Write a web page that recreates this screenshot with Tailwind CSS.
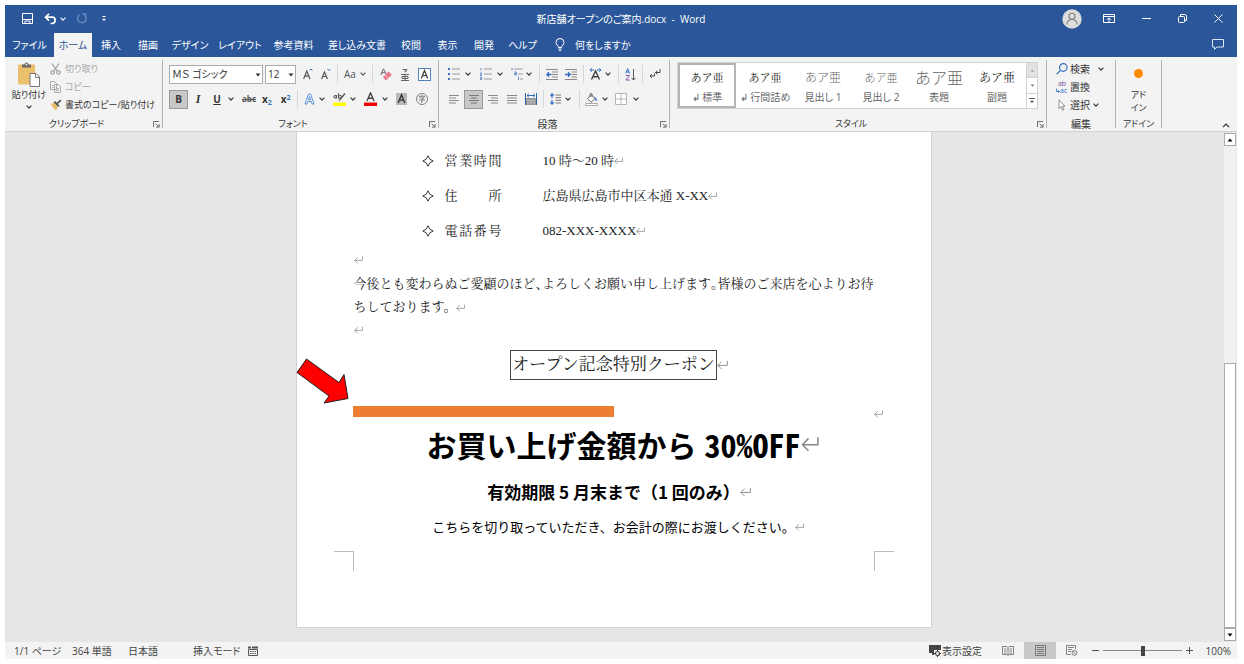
<!DOCTYPE html>
<html lang="ja">
<head>
<meta charset="utf-8">
<meta name="viewport" content="width=device-width, initial-scale=1">
<title>新店舗オープンのご案内.docx - Word</title>
<script src="https://cdn.jsdelivr.net/npm/@tailwindcss/browser@4"></script>
</head>
<body class="bg-white font-['Open_Sans','Noto_Sans_CJK_JP',sans-serif] text-[10px] leading-3 text-[#333]">

<svg class="hidden" aria-hidden="true">
  <symbol id="chev" viewBox="0 0 6 4"><path d="M.6.7 3 3.1 5.4.7" fill="none" stroke="currentColor" stroke-width="1.1"/></symbol>
  <symbol id="tri" viewBox="0 0 6 4"><path d="M.5.5h5L3 3.5z" fill="currentColor"/></symbol>
  <symbol id="ret" viewBox="0 0 24 20"><path d="M22.500 1v10H2M10 2.500 2 11l8 8" fill="none" stroke="#888" stroke-width="2"/></symbol>
  <symbol id="launch" viewBox="0 0 8 8"><path d="M.5 7V.5H7M3 3l3.500 3.500M7 3.500V7H3.500" fill="none" stroke="#555"/></symbol>
  <symbol id="diamond" viewBox="0 0 12 12"><path d="M6 .8Q7 5 11.200 6 7 7 6 11.200 5 7 .8 6 5 5 6 .8z" fill="none" stroke="#222" stroke-width=".9"/></symbol>
</svg>

<div class="flex h-screen flex-col overflow-hidden pt-[5px] pr-[7px] pb-[5px] pl-[5px]">

  <!-- Title bar and tabs -->
  <header class="shrink-0 bg-[#2b579a] text-white [font-feature-settings:'palt']">
    <div class="grid h-[27px] grid-cols-[1fr_auto_1fr] items-center">
      <div class="flex items-center pl-[17px]">
        <button aria-label="上書き保存"><svg class="h-[11px] w-[11px]" viewBox="0 0 11 11" fill="none" stroke="#fff"><path d="M.5.5h10v10H.5zM.5 6.500h10M3 10.500v-2.500h5v2.500" /></svg></button>
        <button aria-label="元に戻す" class="ml-[11px]"><svg class="h-[12px] w-[12px]" viewBox="0 0 12 12" fill="none" stroke="#fff" stroke-width="1.700"><path d="M5 .8 1.500 4.200 5 7.600M1.500 4.200H8a3 3 0 0 1 0 6.300H6.500"/></svg></button>
        <button aria-label="元に戻す一覧" class="ml-1"><svg class="h-1 w-[6px]"><use href="#chev"/></svg></button>
        <button aria-label="繰り返し" class="ml-[10px] text-[#6e8fc4]"><svg class="h-[11px] w-[11px]" viewBox="0 0 11 11" fill="none" stroke="currentColor" stroke-width="1.300"><path d="M8.500 2a4.300 4.300 0 1 1-5-.2M6 .8h3.600v3.700"/></svg></button>
        <button aria-label="クイック アクセスの設定" class="ml-[14px]"><svg class="h-[6px] w-[6px]" viewBox="0 0 6 6" fill="#fff"><path d="M1.500 0h3v1h-3zM1 2.800h4L3 5z"/></svg></button>
      </div>
      <h1 class="whitespace-pre">新店舗オープンのご案内.docx  -  Word</h1>
      <div class="flex items-center justify-end pr-[14px]">
        <button aria-label="アカウント"><svg class="h-5 w-5" viewBox="0 0 20 20"><circle cx="10" cy="10" r="9.700" fill="#dcdcdc"/><g fill="none" stroke="#808080" stroke-width="1.100"><circle cx="10" cy="7.200" r="3"/><path d="M4.800 15.500c.3-3.500 2.400-5 5.200-5s4.900 1.500 5.200 5"/></g></svg></button>
        <button aria-label="リボンの表示オプション" class="ml-[21px]"><svg class="h-[9px] w-[12px]" viewBox="0 0 12 9" fill="none" stroke="#fff"><path d="M.5.500h11v8H.5zM.5 2.500h11M6 8V4M4 5.800l2-2 2 2"/></svg></button>
        <button aria-label="最小化" class="ml-[27px]"><svg class="h-[9px] w-[9px]" viewBox="0 0 9 9"><path d="M0 4.500h9" stroke="#fff"/></svg></button>
        <button aria-label="元に戻す（縮小）" class="ml-[27px]"><svg class="h-[9px] w-[9px]" viewBox="0 0 9 9" fill="none" stroke="#fff"><rect x=".5" y="2.500" width="6" height="6" rx="1"/><path d="M2.500 2V.5h4.200a1.800 1.800 0 0 1 1.800 1.800v4.200H7"/></svg></button>
        <button aria-label="閉じる" class="ml-[27px]"><svg class="h-[9px] w-[9px]" viewBox="0 0 9 9"><path d="m.5.5 8 8m0-8-8 8" stroke="#fff"/></svg></button>
      </div>
    </div>
    <nav class="flex h-[25px] items-stretch whitespace-nowrap" aria-label="リボン タブ">
      <button class="w-[49px]">ファイル</button>
      <button class="mt-px w-[38px] bg-[#f3f3f3] text-[#2b579a]">ホーム</button>
      <button class="w-[38px]">挿入</button>
      <button class="w-[36px]">描画</button>
      <button class="w-[48px]">デザイン</button>
      <button class="w-[52px]">レイアウト</button>
      <button class="w-[55px]">参考資料</button>
      <button class="w-[72px]">差し込み文書</button>
      <button class="w-[36px]">校閲</button>
      <button class="w-[37px]">表示</button>
      <button class="w-[36px]">開発</button>
      <button class="w-[41px]">ヘルプ</button>
      <button class="ml-[12px] flex items-center gap-[10px]"><svg class="h-[13px] w-[10px]" viewBox="0 0 10 13" fill="none" stroke="#fff"><path d="M3.500 9.500C3.500 7.500 1 6.800 1 4.500a4 4 0 0 1 8 0C9 6.800 6.500 7.500 6.500 9.500zM3.500 11h3M4 12.500h2"/></svg>何をしますか</button>
      <button aria-label="コメント" class="mr-[13px] ml-auto"><svg class="h-[11px] w-[12px]" viewBox="0 0 12 11" fill="none" stroke="#dce6f5"><path d="M.5.5h11v7.500H5L2.500 10.300V8h-2z"/></svg></button>
    </nav>
  </header>

  <!-- Ribbon -->
  <section class="flex h-[75px] shrink-0 border-b border-[#d2d2d2] bg-[#f3f3f3] [font-feature-settings:'palt']" aria-label="リボン">

    <div class="flex w-[157px] flex-col text-[9px]">
      <div class="flex flex-1 pt-[4px] pl-[6px]">
        <button class="flex w-[36px] flex-col items-center whitespace-nowrap">
          <svg class="h-[27px] w-[24px] shrink-0" viewBox="0 0 24 27"><rect x="1" y="3.500" width="17" height="20" rx="1" fill="#eac06d"/><path d="M5 6.500V3.500h2.500a2 2 0 0 1 4 0H14v3z" fill="#6a6a6a"/><circle cx="9.500" cy="3.500" r=".9" fill="#f3f3f3"/><path d="M13 12.500h6l3.500 3.500v9.500H13z" fill="#fff" stroke="#777"/><path d="M18.500 12.500V16.500h4" fill="none" stroke="#777"/></svg>
          <span class="mt-px">貼り付け</span>
          <svg class="mt-[4px] h-1 w-[6px]"><use href="#chev"/></svg>
        </button>
        <div class="ml-[3px] flex flex-col items-start gap-[6px] pt-[2px]">
          <button disabled class="flex items-center gap-1 text-[#a6a6a6]"><svg class="h-[12px] w-[11px]" viewBox="0 0 11 12" fill="none" stroke="#999" stroke-width="1.100"><path d="m2 .5 5.300 7.800M9 .5 3.700 8.300"/><circle cx="2.500" cy="9.500" r="1.700"/><circle cx="8.500" cy="9.500" r="1.700"/></svg>切り取り</button>
          <button disabled class="flex items-center gap-1 text-[#a6a6a6]"><svg class="h-[12px] w-[11px]" viewBox="0 0 11 12" fill="#f3f3f3" stroke="#aaa"><path d="M.5.500h4l2 2v6h-6zM4.500 3.500h4l2 2v6h-6z"/><path d="M6 7.500h3M6 9.500h3M2 4.500h1.500M2 6.500h1.500"/></svg>コピー</button>
          <button class="flex items-center gap-[3px] whitespace-nowrap"><svg class="h-[12px] w-[12px]" viewBox="0 0 12 12"><path d="M.8 5 4 3.500 8 7.500 6 11.500Q2.500 9.500.8 5z" fill="#eac06d"/><path d="m3.500 3.200 4.800 4.800 1.300-1.300-1.700-1.700L11.500 1.800 10.300.6 6.800 3.800 5 2z" fill="#555"/></svg>書式のコピー/貼り付け</button>
        </div>
      </div>
      <div class="flex h-[14px] items-center pr-[2px]"><span class="flex-1 pr-[5px] text-center">クリップボード</span><button aria-label="クリップボードの詳細"><svg class="h-[7px] w-[7px]"><use href="#launch"/></svg></button></div>
    </div>
    <div class="my-[3px] w-px bg-[#b4b4b4]"></div>

    <div class="flex w-[275px] flex-col pl-[6px]">
      <div class="flex flex-1 flex-col gap-px pt-[5px]">
        <div class="flex h-6 items-center">
          <div class="relative"><select aria-label="フォント" class="h-[19px] w-[94px] appearance-none border border-[#ababab] bg-white px-[2px] text-[10px] outline-none"><option>ＭＳ ゴシック</option></select><svg class="pointer-events-none absolute top-[8px] right-[2px] h-1 w-[6px]"><use href="#tri"/></svg></div>
          <div class="relative ml-[2px]"><select aria-label="フォント サイズ" class="h-[19px] w-[31px] appearance-none border border-[#ababab] bg-white px-[2px] text-[10px] outline-none"><option>12</option></select><svg class="pointer-events-none absolute top-[8px] right-[2px] h-1 w-[6px]"><use href="#tri"/></svg></div>
          <button aria-label="フォント サイズの拡大" class="ml-[7px]"><svg class="h-[12px] w-[10px]" viewBox="0 0 10 12" fill="none"><path d="m.6 11 3.200-8 3.200 8M1.700 8.200h4.200" stroke="#555" stroke-width="1.200"/><path d="m6.500 2.500 1.500-1.500L9.500 2.500" stroke="#3c6ebf"/></svg></button>
          <button aria-label="フォント サイズの縮小" class="ml-[8px]"><svg class="h-[12px] w-[10px]" viewBox="0 0 10 12" fill="none"><path d="m.6 11 2.900-7 2.900 7M1.600 8.500h3.800" stroke="#555" stroke-width="1.200"/><path d="M6.500 1 8 2.500 9.500 1" stroke="#3c6ebf"/></svg></button>
          <div class="ml-[6px] h-[18px] w-px bg-[#d6d6d6]"></div>
          <button aria-label="文字種の変換" class="ml-[6px] flex items-center gap-1 text-[#555]">Aa<svg class="h-1 w-[6px]"><use href="#chev"/></svg></button>
          <div class="ml-[6px] h-[18px] w-px bg-[#d6d6d6]"></div>
          <button aria-label="書式のクリア" class="ml-[7px]"><svg class="h-[13px] w-[12px]" viewBox="0 0 12 13"><path d="M.8 7 3.500.8 6 6M1.800 4.700h3.300" fill="none" stroke="#666"/><path d="M3 9 8.500 3.500l3.300 3.300-5.500 5.500H5.500z" fill="#e8798c"/><path d="m5 7.300 3.200 3.200" stroke="#fff" stroke-width=".7"/></svg></button>
          <button aria-label="ルビ" class="ml-[9px]"><svg class="h-[13px] w-[8px]" viewBox="0 0 8 13" fill="none" stroke="#555" stroke-width=".9"><path d="M1.500 1.500h4.500L4.500 4M4 2.500v2M0 6.500h8M1 8.500h6v2H1zM4 6.500v6M0 12.500h8"/></svg></button>
          <button aria-label="囲み線" class="ml-[9px]"><svg class="h-[13px] w-[13px]" viewBox="0 0 13 13" fill="none"><rect x=".5" y=".5" width="12" height="12" stroke="#4f81bd" fill="#fff"/><path d="m3.300 10.500 3.200-8 3.200 8M4.400 7.700h4.200" stroke="#444" stroke-width="1.300"/></svg></button>
        </div>
        <div class="flex h-6 items-center">
          <button class="h-[19px] w-[19px] border border-[#999] bg-[#c8c8c8] font-bold">B</button>
          <button class="w-[20px] font-['Liberation_Serif'] text-[12px] font-bold italic">I</button>
          <button class="w-[18px] font-bold underline underline-offset-1">U</button>
          <button aria-label="下線の種類" class="ml-[2px]"><svg class="h-1 w-[6px]"><use href="#chev"/></svg></button>
          <button class="ml-[8px] text-[8px] font-bold text-[#555] line-through">abc</button>
          <button aria-label="下付き" class="ml-[6px] font-bold">x<sub class="text-[7px] leading-none text-[#3c6ebf]">2</sub></button>
          <button aria-label="上付き" class="ml-[9px] font-bold">x<sup class="text-[7px] leading-none text-[#3c6ebf]">2</sup></button>
          <div class="ml-[6px] h-[18px] w-px bg-[#d6d6d6]"></div>
          <button aria-label="文字の効果" class="ml-[6px] flex items-center gap-[4px]"><svg class="h-[12px] w-[11px]" viewBox="0 0 11 12"><path d="M1 11 4.500 1h2L10 11H8L7.300 8.500H3.700L3 11zM4.300 6.800h2.400L5.500 3.500z" fill="#fff" stroke="#5b93d6"/></svg><svg class="h-1 w-[6px]"><use href="#chev"/></svg></button>
          <button aria-label="蛍光ペン" class="ml-[8px] flex items-center gap-[4px]"><svg class="h-[14px] w-[13px]" viewBox="0 0 13 14"><path d="M0 10.500h13V14H0z" fill="#ffff00"/><g fill="none" stroke="#555"><circle cx="2" cy="4.800" r="1.300"/><path d="M3.500 3v3.500M5.500 1v5.500"/><circle cx="7" cy="4.800" r="1.400"/></g><path d="m12.500 2-5 6-2 1.500 1-2.500L11.500 1z" fill="#555"/></svg><svg class="h-1 w-[6px]"><use href="#chev"/></svg></button>
          <button aria-label="フォントの色" class="ml-[8px] flex items-center gap-[5px]"><svg class="h-[14px] w-[13px]" viewBox="0 0 13 14"><path d="M0 10.500h13V14H0z" fill="#f00000"/><path d="M3 9 6.500.8 10 9M4.200 6.300h4.600" fill="none" stroke="#444" stroke-width="1.400"/></svg><svg class="h-1 w-[6px]"><use href="#chev"/></svg></button>
          <button aria-label="文字の網かけ" class="ml-[8px]"><svg class="h-[12px] w-[11px]" viewBox="0 0 11 12"><path d="M0 0h11v12H0z" fill="#b8b8b8"/><path d="m2.200 10 3.300-8.300L8.800 10M3.500 7.200h4" fill="none" stroke="#333" stroke-width="1.300"/></svg></button>
          <button aria-label="囲い文字" class="ml-[9px]"><svg class="h-[12px] w-[12px]" viewBox="0 0 12 12" fill="none" stroke="#666" stroke-width=".8"><circle cx="6" cy="6" r="5.500"/><path d="M6 2v1.200M3.300 4.500V3.300h5.400v1.200M4.200 5h3.600L6 6.300v2.800q0 .6-1 .5M3 7h6"/></svg></button>
        </div>
      </div>
      <div class="flex h-[14px] items-center pr-[2px] text-[9px]"><span class="flex-1 pr-3 text-center">フォント</span><button aria-label="フォントの詳細"><svg class="h-[7px] w-[7px]"><use href="#launch"/></svg></button></div>
    </div>
    <div class="my-[3px] w-px bg-[#b4b4b4]"></div>

    <div class="flex w-[230px] flex-col">
      <div class="flex flex-1 flex-col gap-px pt-[5px] pl-[9px]">
        <div class="flex h-6 items-center">
          <button aria-label="箇条書き" class="flex items-center gap-[5px]"><svg class="h-[12px] w-[12px]" viewBox="0 0 12 12"><path d="M0 0h2v2H0zM0 5h2v2H0zM0 10h2v2H0z" fill="#3c6ebf"/><path d="M4 1h8M4 6h8M4 11h8" stroke="#999"/></svg><svg class="h-1 w-[6px]"><use href="#chev"/></svg></button>
          <button aria-label="段落番号" class="ml-[9px] flex items-center gap-[5px]"><svg class="h-[12px] w-[12px]" viewBox="0 0 12 12"><path d="M1 0v2.500M0 5h1.500v1L0 7.500h2M0 9.500h1.500v2.500H0M0 10.800h1.500" fill="none" stroke="#3c6ebf" stroke-width=".8"/><path d="M4 1h8M4 6h8M4 11h8" stroke="#999"/></svg><svg class="h-1 w-[6px]"><use href="#chev"/></svg></button>
          <button aria-label="アウトライン" class="ml-[8px] flex items-center gap-[3px]"><svg class="h-[12px] w-[12px]" viewBox="0 0 12 12"><path d="M1 0v2.500M3.500 4h1.800v3H3.500V5.500h1.800M7.500 8.500V12" fill="none" stroke="#3c6ebf" stroke-width=".8"/><path d="M3 1h9M7 6h5M9 11h3" stroke="#999"/></svg><svg class="h-1 w-[6px]"><use href="#chev"/></svg></button>
          <div class="ml-[7px] h-[18px] w-px bg-[#d6d6d6]"></div>
          <button aria-label="インデントを減らす" class="ml-[6px]"><svg class="h-[11px] w-[12px]" viewBox="0 0 12 11" fill="none"><path d="M0 .5h12M6 3h6M6 5.500h6M6 8h6M0 10.500h12" stroke="#888"/><path d="M5.500 5.500H1M3 3.200.8 5.500 3 7.800" stroke="#2f6cc0" stroke-width="1.300"/></svg></button>
          <button aria-label="インデントを増やす" class="ml-[7px]"><svg class="h-[11px] w-[12px]" viewBox="0 0 12 11" fill="none"><path d="M0 .5h12M6.500 3H12M6.500 5.500H12M6.500 8H12M0 10.500h12" stroke="#888"/><path d="M0 5.500h5M3 3.200l2.200 2.300L3 7.800" stroke="#2f6cc0" stroke-width="1.300"/></svg></button>
          <div class="ml-[6px] h-[18px] w-px bg-[#d6d6d6]"></div>
          <button aria-label="拡張書式" class="ml-[5px] flex items-center gap-[3px]"><svg class="h-[12px] w-[13px]" viewBox="0 0 13 12" fill="none"><path d="m2.500 11.500 4-8.500 4 8.500M4 8.800h5" stroke="#444" stroke-width="1.400"/><path d="M5 2H1m1.800-1.700L1 2l1.800 1.700M8 2h4M10.200.3 12 2l-1.800 1.700" stroke="#2f6cc0"/></svg><svg class="h-1 w-[6px]"><use href="#chev"/></svg></button>
          <div class="ml-[7px] h-[18px] w-px bg-[#d6d6d6]"></div>
          <button aria-label="並べ替え" class="ml-[6px]"><svg class="h-[13px] w-[11px]" viewBox="0 0 11 13" fill="none"><path d="M.7 5.500 2.700.7l2 4.800M1.400 4h2.600" stroke="#2f6cc0"/><path d="M.8 7.500h3.800L.8 12h4" stroke="#8a4fa8"/><path d="M8.500 1v11M6.500 9.800l2 2.200 2-2.200" stroke="#555"/></svg></button>
          <div class="ml-[6px] h-[18px] w-px bg-[#d6d6d6]"></div>
          <button aria-label="編集記号の表示" class="ml-[6px]"><svg class="h-[10px] w-[12px]" viewBox="0 0 12 10" fill="none" stroke="#444"><path d="M11 0v3.500H6.500M8.300 1.700 6.500 3.500l1.800 1.800M5.500 4.500v2.500H1M2.800 5.200 1 7l1.800 1.800"/></svg></button>
        </div>
        <div class="flex h-6 items-center">
          <button aria-label="左揃え" class="ml-px"><svg class="h-[9px] w-[10px]" viewBox="0 0 10 9" stroke="#888"><path d="M0 .5h10M0 3h7M0 5.500h10M0 8h7"/></svg></button>
          <button aria-label="中央揃え" class="ml-[5px] grid h-[19px] w-[19px] place-items-center border border-[#999] bg-[#c8c8c8]"><svg class="h-[9px] w-[10px]" viewBox="0 0 10 9" stroke="#777"><path d="M0 .5h10M2 3h6M0 5.500h10M2 8h6"/></svg></button>
          <button aria-label="右揃え" class="ml-[5px]"><svg class="h-[9px] w-[10px]" viewBox="0 0 10 9" stroke="#888"><path d="M0 .5h10M3 3h7M0 5.500h10M3 8h7"/></svg></button>
          <button aria-label="両端揃え" class="ml-[9px]"><svg class="h-[9px] w-[10px]" viewBox="0 0 10 9" stroke="#888"><path d="M0 .5h10M0 3h10M0 5.500h10M0 8h10"/></svg></button>
          <button aria-label="均等割り付け" class="ml-[8px]"><svg class="h-[12px] w-[12px]" viewBox="0 0 12 12" fill="none"><path d="M0 5h12v7H0z" fill="#999"/><path d="M.5 0v12M11.500 0v12" stroke="#2f5fa8"/><path d="M2 2.500h8M3.800.8 2 2.500l1.800 1.700M8.200.8 10 2.500 8.200 4.200" stroke="#2f6cc0"/><path d="M2 7.500h8M2 9.800h8" stroke="#ddd" stroke-width=".6"/></svg></button>
          <div class="ml-[6px] h-[18px] w-px bg-[#d6d6d6]"></div>
          <button aria-label="行間" class="ml-[6px] flex items-center gap-[4px]"><svg class="h-[12px] w-[11px]" viewBox="0 0 11 12" fill="none"><path d="M2 1v4M2 7v4M.3 2.700 2 .8l1.700 1.900M.3 9.300 2 11.200l1.700-1.900" stroke="#2f6cc0" stroke-width="1.200"/><path d="M5.500 2H11M5.500 4.700H11M5.500 7.300H11M5.500 10H11" stroke="#777"/></svg><svg class="h-1 w-[6px]"><use href="#chev"/></svg></button>
          <div class="ml-[8px] h-[18px] w-px bg-[#d6d6d6]"></div>
          <button aria-label="塗りつぶし" class="ml-[5px] flex items-center gap-[4px]"><svg class="h-[13px] w-[13px]" viewBox="0 0 13 13"><path d="M.5 10.500h12v2H.5z" fill="#fff" stroke="#aaa"/><path d="M2.500 5.500 6.500 2 10 5.500 6 9.300zM5 4V.8h2V4" fill="#fff" stroke="#666"/><path d="M9 3.500q3 1 2.800 5-2-1-1.800-3z" fill="#2f6cc0"/></svg><svg class="h-1 w-[6px]"><use href="#chev"/></svg></button>
          <button aria-label="罫線" class="ml-[7px] flex items-center gap-[6px]"><svg class="h-[12px] w-[12px]" viewBox="0 0 12 12" fill="#fff" stroke="#b4b4b4"><path d="M.5.5h11v11H.5zM6 .5v11M.5 6h11"/></svg><svg class="h-1 w-[6px]"><use href="#chev"/></svg></button>
        </div>
      </div>
      <div class="flex h-[14px] items-center pr-[2px]"><span class="flex-1 pr-1 text-center">段落</span><button aria-label="段落の詳細"><svg class="h-[7px] w-[7px]"><use href="#launch"/></svg></button></div>
    </div>
    <div class="my-[3px] w-px bg-[#b4b4b4]"></div>

    <div class="flex w-[376px] flex-col pl-[7px]">
      <div class="flex-1 pt-[5px]">
        <div class="flex h-[47px] w-[361px] border border-[#d2d2d2] bg-white text-[#666]">
          <button class="flex w-[58px] flex-col items-center border-2 border-[#b4b4b4] pt-[4px]"><span class="h-4 font-['Noto_Serif_CJK_JP',serif] text-[11px] leading-4 text-[#222] [font-feature-settings:normal]">あア亜</span><span class="mt-[6px]">↲ 標準</span></button>
          <button class="flex w-[58px] flex-col items-center pt-[6px]"><span class="h-4 font-['Noto_Serif_CJK_JP',serif] text-[11px] leading-4 text-[#222] [font-feature-settings:normal]">あア亜</span><span class="mt-[6px] whitespace-nowrap">↲ 行間詰め</span></button>
          <button class="flex w-[58px] flex-col items-center pt-[6px]"><span class="h-4 font-['Noto_Sans_CJK_JP',sans-serif] text-[12px] leading-4 font-light [font-feature-settings:normal]">あア亜</span><span class="mt-[6px]">見出し 1</span></button>
          <button class="flex w-[58px] flex-col items-center pt-[6px]"><span class="h-4 font-['Noto_Sans_CJK_JP',sans-serif] text-[11px] leading-4 font-light [font-feature-settings:normal]">あア亜</span><span class="mt-[6px]">見出し 2</span></button>
          <button class="flex w-[58px] flex-col items-center pt-[6px]"><span class="h-4 font-['Noto_Sans_CJK_JP',sans-serif] text-[16px] leading-4 font-light [font-feature-settings:normal]">あア亜</span><span class="mt-[6px]">表題</span></button>
          <button class="flex w-[58px] flex-col items-center pt-[6px]"><span class="h-4 font-['Noto_Serif_CJK_JP',serif] text-[12px] leading-4 text-[#222] [font-feature-settings:normal]">あア亜</span><span class="mt-[6px]">副題</span></button>
          <div class="flex flex-1 flex-col divide-y divide-[#d2d2d2] border-l border-[#d2d2d2] text-[#777]">
            <button aria-label="上へ" class="grid flex-1 place-items-center bg-[#e1e1e1] text-[#aaa]"><svg class="h-[3px] w-[5px] rotate-180"><use href="#tri"/></svg></button>
            <button aria-label="下へ" class="grid flex-1 place-items-center"><svg class="h-[3px] w-[5px]"><use href="#tri"/></svg></button>
            <button aria-label="その他" class="grid flex-1 place-items-center"><svg class="h-[6px] w-[6px]" viewBox="0 0 6 6" fill="#666"><path d="M0 0h6v1H0zM.8 2.800h4.400L3 5.200z"/></svg></button>
          </div>
        </div>
      </div>
      <div class="flex h-[14px] items-center pr-[2px] text-[9px]"><span class="flex-1 pr-3 text-center">スタイル</span><button aria-label="スタイルの詳細"><svg class="h-[7px] w-[7px]"><use href="#launch"/></svg></button></div>
    </div>
    <div class="my-[3px] w-px bg-[#b4b4b4]"></div>

    <div class="flex w-[68px] flex-col">
      <div class="flex flex-1 flex-col items-start gap-[6px] pt-[6px] pl-[9px]">
        <button class="flex items-center gap-[2px]"><svg class="h-[12px] w-[12px]" viewBox="0 0 12 12" fill="none" stroke="#2f6cc0" stroke-width="1.200"><circle cx="7.300" cy="4.500" r="3.800"/><path d="M4.500 7.300.7 11.200"/></svg>検索<svg class="ml-[6px] h-1 w-[6px]"><use href="#chev"/></svg></button>
        <button class="flex h-3 items-center gap-[2px]"><span class="flex w-[12px] flex-col text-[7px] leading-[7px]"><span class="text-[#7a4fa0]">ab</span><span class="flex items-center text-[#2f6cc0]"><svg class="h-[6px] w-[4px] shrink-0" viewBox="0 0 4 6" fill="none" stroke="currentColor" stroke-width=".8"><path d="M.5.5v3h3M2 2l1.500 1.500L2 5"/></svg>ac</span></span>置換</button>
        <button class="flex items-center gap-[2px]"><svg class="h-[12px] w-[12px]" viewBox="0 0 12 12"><path d="M3 .8v8.700L5 7.500l1.500 3.700 1.500-.7-1.500-3.400H9z" fill="#fff" stroke="#777" stroke-width=".8"/></svg>選択<svg class="ml-px h-1 w-[6px]"><use href="#chev"/></svg></button>
      </div>
      <div class="flex h-[14px] items-center justify-center">編集</div>
    </div>
    <div class="my-[3px] w-px bg-[#b4b4b4]"></div>

    <div class="flex w-[45px] flex-col text-[9px]">
      <button class="flex flex-1 flex-col items-center pt-[12px]"><span class="h-[9px] w-[9px] rounded-full bg-[#ff8c00]"></span><span class="mt-[10px] leading-[13px]">アド<br>イン</span></button>
      <div class="flex h-[14px] items-center justify-center">アドイン</div>
    </div>
    <div class="my-[3px] w-px bg-[#b4b4b4]"></div>
    <button aria-label="リボンを折りたたむ" class="mr-[7px] mb-[3px] ml-auto self-end"><svg class="h-[5px] w-[8px] rotate-180"><use href="#chev"/></svg></button>
  </section>

  <!-- Document area -->
  <div class="flex min-h-0 flex-1 bg-[#e6e6e6]">
    <main class="flex-1 pr-[2px]">
      <article class="relative mx-auto w-[636px] border-x border-b border-[#d2d2d2] bg-white px-[57px] pt-[11px] pb-[56px] font-['Liberation_Serif','Noto_Serif_CJK_JP','Noto_Sans_CJK_JP',serif] text-[13px] leading-6 text-[#222]">
        <dl class="pl-[68px]">
          <div class="flex h-[35px] items-center"><svg class="h-[12px] w-[12px]"><use href="#diamond"/></svg><dt class="ml-[11px] w-[57px] [text-align-last:justify]">営業時間</dt><dd class="ml-[41px] flex items-center">10 時～20 時<svg class="h-[8px] w-[9px]"><use href="#ret"/></svg></dd></div>
          <div class="flex h-[35px] items-center"><svg class="h-[12px] w-[12px]"><use href="#diamond"/></svg><dt class="ml-[11px] w-[57px] [text-align-last:justify]">住 所</dt><dd class="ml-[41px] flex items-center">広島県広島市中区本通 X-XX<svg class="h-[8px] w-[9px]"><use href="#ret"/></svg></dd></div>
          <div class="flex h-[35px] items-center"><svg class="h-[12px] w-[12px]"><use href="#diamond"/></svg><dt class="ml-[11px] w-[57px] [text-align-last:justify]">電話番号</dt><dd class="ml-[41px] flex items-center">082-XXX-XXXX<svg class="h-[8px] w-[9px]"><use href="#ret"/></svg></dd></div>
        </dl>
        <p class="flex h-6 items-center"><svg class="h-[8px] w-[9px]"><use href="#ret"/></svg></p>
        <p class="-mr-2 leading-[23px]">今後とも変わらぬご愛顧のほど<span class="[font-feature-settings:'halt']">、</span>よろしくお願い申し上げます<span class="[font-feature-settings:'halt']">。</span>皆様のご来店を心よりお待<br>ちしております。<svg class="inline h-[8px] w-[9px]"><use href="#ret"/></svg></p>
        <p class="flex h-6 items-center"><svg class="h-[8px] w-[9px]"><use href="#ret"/></svg></p>
        <p class="mt-[8px] flex items-center justify-center"><span class="flex h-[30px] items-center border border-[#444] px-px text-[17px]">オープン記念特別クーポン</span><svg class="-mr-[11px] h-[10px] w-[11px]"><use href="#ret"/></svg></p>
        <div class="mt-[26px] flex h-[11px] justify-between"><div class="-ml-px w-[261px] bg-[#ed7d31]"></div><svg class="-mr-[9px] mt-[4px] h-[8px] w-[9px]"><use href="#ret"/></svg></div>
        <h2 class="mt-[7px] flex h-10 items-center justify-center font-['Noto_Sans_CJK_JP',sans-serif] text-[30px] leading-10 font-bold text-black">お買い上げ金額から<span class="ml-2 text-[32px] [font-feature-settings:'hwid']">30%OFF</span><svg class="-mr-[18px] h-[16px] w-[18px]"><use href="#ret"/></svg></h2>
        <p class="mt-[16px] flex h-6 items-center justify-center font-['Noto_Sans_CJK_JP',sans-serif] text-[17px] font-bold whitespace-pre text-black">有効期限 5 月末まで（1 回のみ）<svg class="-mr-[11px] h-[10px] w-[11px]"><use href="#ret"/></svg></p>
        <p class="mt-[12px] flex h-[22px] items-center justify-center font-['Noto_Sans_CJK_JP',sans-serif] text-[13px] text-black">こちらを切り取っていただき、お会計の際にお渡しください。<svg class="-mr-[9px] h-[8px] w-[9px]"><use href="#ret"/></svg></p>
        <div class="-mx-[20px] mt-[13px] flex justify-between"><span class="h-5 w-5 border-t border-r border-[#bbb]"></span><span class="h-5 w-5 border-t border-l border-[#bbb]"></span></div>
        <svg class="absolute top-[226px] -left-px h-[47px] w-[54px]" viewBox="0 0 54 47"><path d="M1 14.500 10.500 1 43 24.500 48 16.500 52 40.500 28 45 33 38z" fill="#f00" stroke="#222" stroke-width="1"/></svg>
      </article>
    </main>
    <div class="mr-px flex w-[12px] flex-col" aria-label="スクロール バー">
      <button aria-label="上にスクロール" class="mt-px grid h-[13px] place-items-center border border-[#ababab] bg-white text-black"><svg class="h-1 w-[6px] rotate-180"><use href="#tri"/></svg></button>
      <div class="flex flex-1 flex-col justify-end bg-[#f0f0f0]"><div class="h-[55%] border border-[#ababab] bg-white"></div></div>
      <button aria-label="下にスクロール" class="mb-px grid h-[13px] place-items-center border border-[#ababab] bg-white text-black"><svg class="h-1 w-[6px]"><use href="#tri"/></svg></button>
    </div>
  </div>

  <!-- Status bar -->
  <footer class="flex h-[17px] shrink-0 items-center bg-[#f3f3f3] pl-[9px] whitespace-nowrap text-[#444] [font-feature-settings:'palt']">
    <span class="w-[58px]">1/1 ページ</span><span class="w-[56px]">364 単語</span><span class="w-[65px]">日本語</span><span class="w-[55px]">挿入モード</span>
    <svg class="h-[10px] w-[10px]" viewBox="0 0 10 10" fill="none" stroke="#555"><path d="M.5 3.500h9v6h-9z"/><path d="M0 1.500h3M4 1.500h6" stroke-width="2"/><path d="M2 5.500h6M2 7.500h6" stroke-dasharray="1.500 .8"/></svg>
    <button class="ml-auto flex items-center gap-px"><svg class="h-[12px] w-[12px]" viewBox="0 0 12 12"><path d="M0 0h12v5H5v5H3V8H0z" fill="#444"/><circle cx="8.500" cy="8.500" r="2" fill="none" stroke="#444" stroke-width="1.200"/><path d="M8.500 5v1.500M8.500 10.500V12M5 8.500h1.500M10.500 8.500H12" stroke="#444"/></svg>表示設定</button>
    <button aria-label="閲覧モード" class="ml-[20px]"><svg class="h-[10px] w-[12px]" viewBox="0 0 12 10" fill="none" stroke="#777" stroke-width=".9"><path d="M.5.5H5l1 1 1-1h4.500v8H7l-1 1-1-1H.5zM6 1.500v8M2 3h2.500M2 5h2.500M2 7h2.500M7.500 3H10M7.500 5H10M7.500 7H10"/></svg></button>
    <button aria-label="印刷レイアウト" class="ml-[10px] grid h-full w-[32px] place-items-center bg-[#c8c8c8]"><svg class="h-[11px] w-[11px]" viewBox="0 0 11 11" fill="none" stroke="#777"><path d="M.5.500h10v10H.5zM2 2.500h7M2 4.500h7M2 6.500h7M2 8.500h7"/></svg></button>
    <button aria-label="Web レイアウト" class="ml-[10px]"><svg class="h-[11px] w-[12px]" viewBox="0 0 12 11" fill="none" stroke="#777" stroke-width=".9"><path d="M5 9.500H.5v-9h9V4M2 2.500h6M2 4.500h4M2 6.500h3"/><circle cx="8.500" cy="7.800" r="2.500"/><path d="m7 6 3 3.500"/></svg></button>
    <button aria-label="縮小" class="ml-[14px] w-[7px]"><svg class="h-[7px] w-[7px]" viewBox="0 0 7 7"><path d="M0 3.500h7" stroke="#555"/></svg></button>
    <input type="range" aria-label="ズーム" min="0" max="100" value="50" class="ml-1 h-[11px] w-[79px] appearance-none bg-transparent bg-[linear-gradient(#888,#888)] bg-[length:100%_1px] bg-center bg-no-repeat [&::-webkit-slider-thumb]:h-[10px] [&::-webkit-slider-thumb]:w-[4px] [&::-webkit-slider-thumb]:appearance-none [&::-webkit-slider-thumb]:bg-[#444]">
    <button aria-label="拡大" class="ml-1 w-[7px]"><svg class="h-[7px] w-[7px]" viewBox="0 0 7 7"><path d="M0 3.500h7M3.500 0v7" stroke="#555"/></svg></button>
    <span class="mr-[6px] ml-[10px] w-[28px] text-right">100%</span>
  </footer>
</div>
</body>
</html>
